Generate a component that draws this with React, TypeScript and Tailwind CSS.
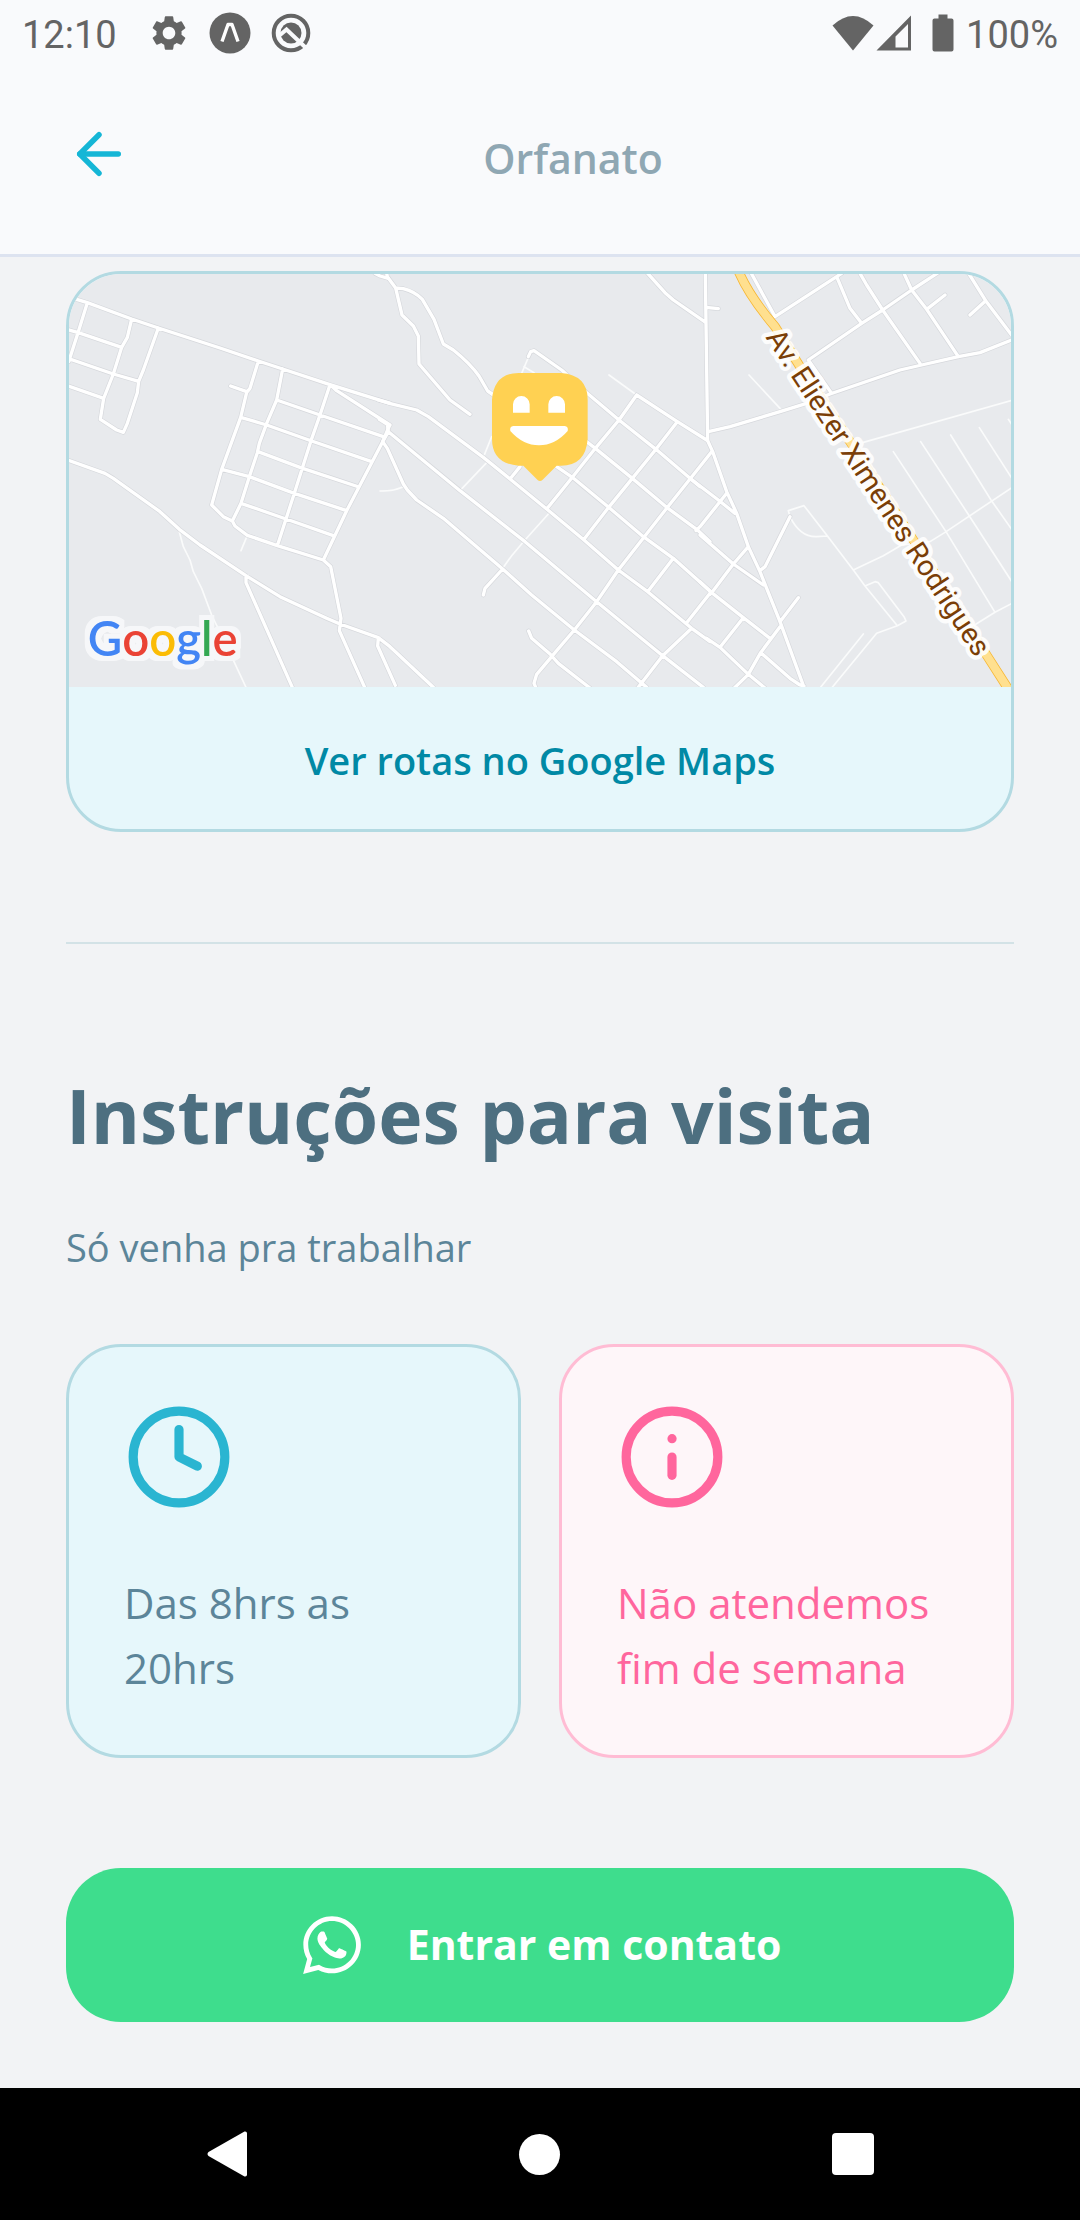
import React from "react";
import { ArrowLeft, Clock, Info } from "lucide-react";
import { FaWhatsapp } from "react-icons/fa";
import { MdSettings } from "react-icons/md";

type RoadGroup = { shift: string; streets: string; lanes: string };

const roadGroups: RoadGroup[] = [
  {
    shift: "translate(-27 -42)",
    streets:
      "M40 115L82 128L215 177L295 204L480 264L595 303L668 327L810 374L990 430 M82 128L55 215L26 305 M20 208L55 218L185 262 M215 177L202 232L185 262L160 342L131 415L121 478L170 510L190 517L202 490L232 398L236 364L250 330L295 204 M20 294L160 342L236 364 M20 376L131 415 M20 599L135 640L160 655L300 755L358 808L420 855L558 947L660 1010L800 1075L840 1092L955 1133L990 1160L1120 1282 M595 303L570 385L560 397L542 472L485 628L455 735L490 770L517 783L525 798L562 826L652 857L790 900L812 920L843 1075L838 1112L914 1282 M512 378L560 395 M668 327L650 420L620 490L598 550L592 578L568 650L543 730L517 783 M810 374L780 465L752 545L703 700L652 857 M650 420L780 465L970 530 M542 472L620 495L755 543L935 605 M594 575L728 625L897 681 M485 628L568 650L703 700L860 752 M543 730L678 777L820 827 M815 378L830 392L990 495 M790 900L860 752L968 545L988 498 M558 947L558 968L697 1282 M955 1133L953 1158L1006 1276 M945 40L960 48L985 55",
    lanes:
      "M357 812L370 860L390 900L400 935L425 985L455 1065L515 1190L558 1282 M562 826L543 872",
  },
  {
    shift: "translate(933 -42)",
    streets:
      "M20 40L22 50L47 84L66 165L100 198L115 228L117 312L210 420L270 463 M47 84L70 86Q105 95 127 118L162 178L190 252L220 270Q270 310 297 348L323 393L345 408 M28 430L110 450L145 470L310 592L390 657L500 747L612 840L715 930L803 995L935 1105L990 1145 M-5 420L30 430 M-2 478L22 493L25 515L240 692L435 845L650 1025L848 1187L970 1282 M25 515L8 545L22 565L70 672L82 690L110 720L190 775L368 927L455 1005L583 1110L710 1205L800 1282 M368 927L315 985L310 1005 M445 290L452 275L462 272L545 330L620 398L717 480L828 568L930 655L960 680 M770 405L717 480L646 565L577 652L500 747 M770 405L892 485L980 540 M892 485L826 570L757 655L686 742L612 838 M420 620L390 657 M600 530L646 565L757 655 M646 565L757 655 L860 742L950 808L990 845 M530 620L577 652L686 742L790 830L880 895L990 993 M995 575L930 657L860 745L793 830L715 930L650 1025L583 1110L530 1172L515 1190L470 1243L462 1270L468 1284 M446 1113L455 1135L510 1182L535 1210L630 1284 M880 895L803 995 M990 1000L920 1088 M935 1105L848 1187L773 1284 M803 40L855 98L880 120L977 187 M976 40L978 190L983 540 M978 142L1015 146",
    lanes:
      "M0 693C40 693 50 688 75 679 M240 692L320 608 M310 592L335 530 M505 762L435 840L395 887L368 925 M425 340L448 285 M432 320L462 338 M687 345L770 405",
  },
  {
    shift: "translate(1893 -42)",
    streets:
      "M22 540L38 575L80 695L110 760L145 860L180 935L240 1085L312 1282 M25 515L90 500L240 455L320 430L390 402L600 330L665 315L775 290L840 278L940 238 M80 700L0 800L-12 812 M-30 655L55 720L105 760 M0 825L100 912L190 975 M145 860L100 912L35 998L30 1003 M0 965L35 998L130 1073L210 1135 M130 1073L60 1162 M20 1135L60 1162L145 1243L195 1284 M240 1085L295 1013 M240 1100L182 1178L145 1243L103 1284 M182 1178L270 1255L300 1275L312 1278 M155 42L225 170L410 50L425 40 M410 50L450 145L485 190 M325 300L485 190L548 150L635 90L715 38 M325 300L395 400 M480 40L500 75L548 150L660 310 M612 40L635 90L680 148L775 290 M680 148L735 105 M806 40L857 122L940 232 M857 122L810 165 M180 932L195 920L270 770",
    lanes:
      "M270 770L265 752L312 737L380 825L460 930L495 978L592 1097L618 1083L612 1070L535 968L525 965L495 978 M270 770Q300 832 350 830L382 828 M460 930L550 887L605 855L690 845L735 817L940 680 M592 1097L530 1120L395 1284 M490 1122L360 1284 M490 547L940 420 M147 345L240 445 M580 575L738 815L885 1057 M662 545L808 768L940 972 M752 525L873 720L940 815 M838 503L940 662 M925 478L940 500 M820 1097L885 1057L940 1028",
  },
];

function OrphanageMap() {
  return (
    <svg
      viewBox="0 0 2826 1239"
      className="block w-full bg-[#e8eaed]"
      role="img"
      aria-label="Mapa com a localização do orfanato"
      fill="none"
      strokeLinecap="round"
      strokeLinejoin="round"
    >
      <defs>
        <filter id="halo" x="-10%" y="-20%" width="120%" height="140%" colorInterpolationFilters="sRGB">
          <feMorphology in="SourceAlpha" operator="dilate" radius="15" result="grown" />
          <feFlood floodColor="#f6f7f9" />
          <feComposite in2="grown" operator="in" result="edge" />
          <feMerge>
            <feMergeNode in="edge" />
            <feMergeNode in="SourceGraphic" />
          </feMerge>
        </filter>
      </defs>
      {roadGroups.map((g) => (
        <path key={g.shift} d={g.lanes} transform={g.shift} stroke="#fafbfb" strokeWidth={5} />
      ))}
      {roadGroups.map((g) => (
        <path key={g.shift} d={g.streets} transform={g.shift} stroke="#d6d8dc" strokeWidth={14} />
      ))}
      {roadGroups.map((g) => (
        <path key={g.shift} d={g.streets} transform={g.shift} stroke="#ffffff" strokeWidth={10} />
      ))}
      <g transform="translate(1893 -42)">
        <path d="M114 30Q145 105 225 200L300 320L460 560L640 840L850 1170L930 1295" stroke="#f7b733" strokeWidth={29} />
        <path d="M114 30Q145 105 225 200L300 320L460 560L640 840L850 1170L930 1295" stroke="#ffe08f" strokeWidth={24} />
        <text
          transform="translate(196 232) rotate(56.8)"
          className="font-['Roboto'] text-[86px]"
          fill="#7a3e06"
          stroke="#ffffff"
          strokeOpacity={0.88}
          strokeWidth={26}
          paintOrder="stroke"
        >
          Av. Eliezer Ximenes Rodrigues
        </text>
      </g>
      <g transform="translate(933 -42)">
        <path
          d="M416 339H543Q623 345 623 419V537Q617 617 543 617H530L488 659Q480 667 472 659L430 617H416Q336 611 336 537V419Q342 339 416 339Z"
          fill="#ffd152"
        />
        <path d="M399 458V433A25 25 0 0 1 449 433V458Z M505 458V433A25 25 0 0 1 555 433V458Z" fill="#fff" />
        <path d="M400 498H554Q566 500 563 513Q525 556 477 556Q429 556 391 513Q388 500 400 498Z" fill="#fff" />
      </g>
      <text x="56" y="1145" className="font-['Lato'] text-[142px] font-semibold" filter="url(#halo)">
        <tspan fill="#4285f4">G</tspan>
        <tspan fill="#ea4335">o</tspan>
        <tspan fill="#fbbc05">o</tspan>
        <tspan fill="#4285f4">g</tspan>
        <tspan fill="#34a853">l</tspan>
        <tspan fill="#ea4335">e</tspan>
      </text>
    </svg>
  );
}

function StatusBar() {
  return (
    <div className="flex h-[66px] items-center justify-between px-[22px] font-['Roboto'] text-[38px] leading-none text-[#646464]">
      <div className="flex items-center">
        <span className="pt-1">12:10</span>
        <MdSettings className="ml-[31px] size-[42px]" />
        <svg viewBox="0 0 42 42" className="ml-[19px] size-[42px]">
          <circle cx="21" cy="21" r="20.5" fill="currentColor" />
          <path d="M13 29.500L19 12.500H23L29 29.500" fill="none" stroke="#fff" strokeWidth="3.4" strokeLinejoin="round" />
        </svg>
        <svg viewBox="0 0 42 42" className="ml-[19px] size-[42px]" fill="none" stroke="currentColor">
          <circle cx="21" cy="21" r="17.3" strokeWidth="4" />
          <circle cx="21" cy="21" r="10.5" fill="currentColor" stroke="none" />
          <path d="M10 23L16.500 17.500L35 35" stroke="#f9fafc" strokeWidth="4" />
        </svg>
      </div>
      <div className="flex items-center">
        <svg viewBox="0 0 42 36" className="h-9 w-[42px]" fill="currentColor">
          <path d="M0.500 10.500Q21 -8.500 41.500 10.500L21 35.500Z" />
        </svg>
        <svg viewBox="0 0 36 36" className="ml-0.5 size-9" fill="currentColor" fillRule="evenodd">
          <path d="M35 0.500V35.500H0.500ZM32 9L19.500 21.500V32.500H32Z" />
        </svg>
        <svg viewBox="0 0 22 38" className="ml-5 h-[38px] w-[22px]" fill="currentColor">
          <path d="M6.500 0.500H15.500V4.500H19.500Q21.500 4.500 21.500 6.500V35.500Q21.500 37.500 19.500 37.500H2.500Q0.500 37.500 0.500 35.500V6.500Q0.500 4.500 2.500 4.500H6.500Z" />
        </svg>
        <span className="ml-3 pt-1">100%</span>
      </div>
    </div>
  );
}

export default function App() {
  return (
    <div className="flex min-h-screen flex-col bg-[#f2f3f5] font-['Open_Sans',sans-serif]">
      <header className="border-b-3 border-[#dde3f0] bg-[#f9fafc]">
        <StatusBar />
        <div className="flex items-start px-[66px] pt-[55px] pb-[63px]">
          <button type="button" aria-label="Voltar" className="text-[#15b6d6]">
            <ArrowLeft className="size-[66px]" strokeWidth={2} />
          </button>
          <h1 className="flex-1 pt-1 text-center text-[41px] leading-[66px] font-semibold text-[#8fa7b3]">Orfanato</h1>
        </div>
      </header>

      <main className="flex-1 px-[66px] pt-[14px] pb-[66px]">
        <section className="overflow-hidden rounded-[55px] border-3 border-[#b3dae2] bg-[#e6f7fb]">
          <OrphanageMap />
          <a
            href="#rotas"
            className="flex h-[142px] items-center justify-center pt-1 text-[38px] font-semibold text-[#0089a5]"
          >
            Ver rotas no Google Maps
          </a>
        </section>

        <hr className="mt-[110px] border-t-2 border-[#d3e2e6]" />

        <h2 className="mt-[116px] text-[75px] leading-[110px] font-bold text-[#4d6f80]">Instruções para visita</h2>
        <p className="mt-[44px] text-[38px] leading-[66px] text-[#5c8599]">Só venha pra trabalhar</p>

        <div className="mt-[64px] grid grid-cols-2 gap-[38px]">
          <div className="rounded-[55px] border-3 border-[#b3dae2] bg-[#e6f7fb] p-[55px] text-[#5c8599]">
            <Clock className="size-[110px] text-[#2ab5d1]" strokeWidth={2} />
            <p className="mt-[58px] text-[42px] leading-[65px]">Das 8hrs as 20hrs</p>
          </div>
          <div className="rounded-[55px] border-3 border-[#ffbcd4] bg-[#fef6f9] p-[55px] text-[#ff669d]">
            <Info className="size-[110px]" strokeWidth={2} />
            <p className="mt-[58px] text-[42px] leading-[65px]">Não atendemos fim de semana</p>
          </div>
        </div>

        <button
          type="button"
          className="mt-[110px] flex h-[154px] w-full items-center justify-center gap-[42px] rounded-[55px] bg-[#3edd8d] text-[41px] font-bold text-white"
        >
          <FaWhatsapp className="size-[66px]" />
          Entrar em contato
        </button>
      </main>

      <nav className="flex h-[132px] items-center justify-around bg-black px-[70px] text-white">
        <button type="button" aria-label="Voltar">
          <svg viewBox="0 0 42 46" className="h-[46px] w-[42px]" fill="currentColor">
            <path d="M38.500 0.500Q41 0 41 2.500V43.500Q41 46 38.500 45.500L2.500 25Q0.500 23 2.500 21Z" />
          </svg>
        </button>
        <button type="button" aria-label="Início" className="size-[41px] rounded-full bg-white" />
        <button type="button" aria-label="Recentes" className="size-[42px] rounded-[4px] bg-white" />
      </nav>
    </div>
  );
}
